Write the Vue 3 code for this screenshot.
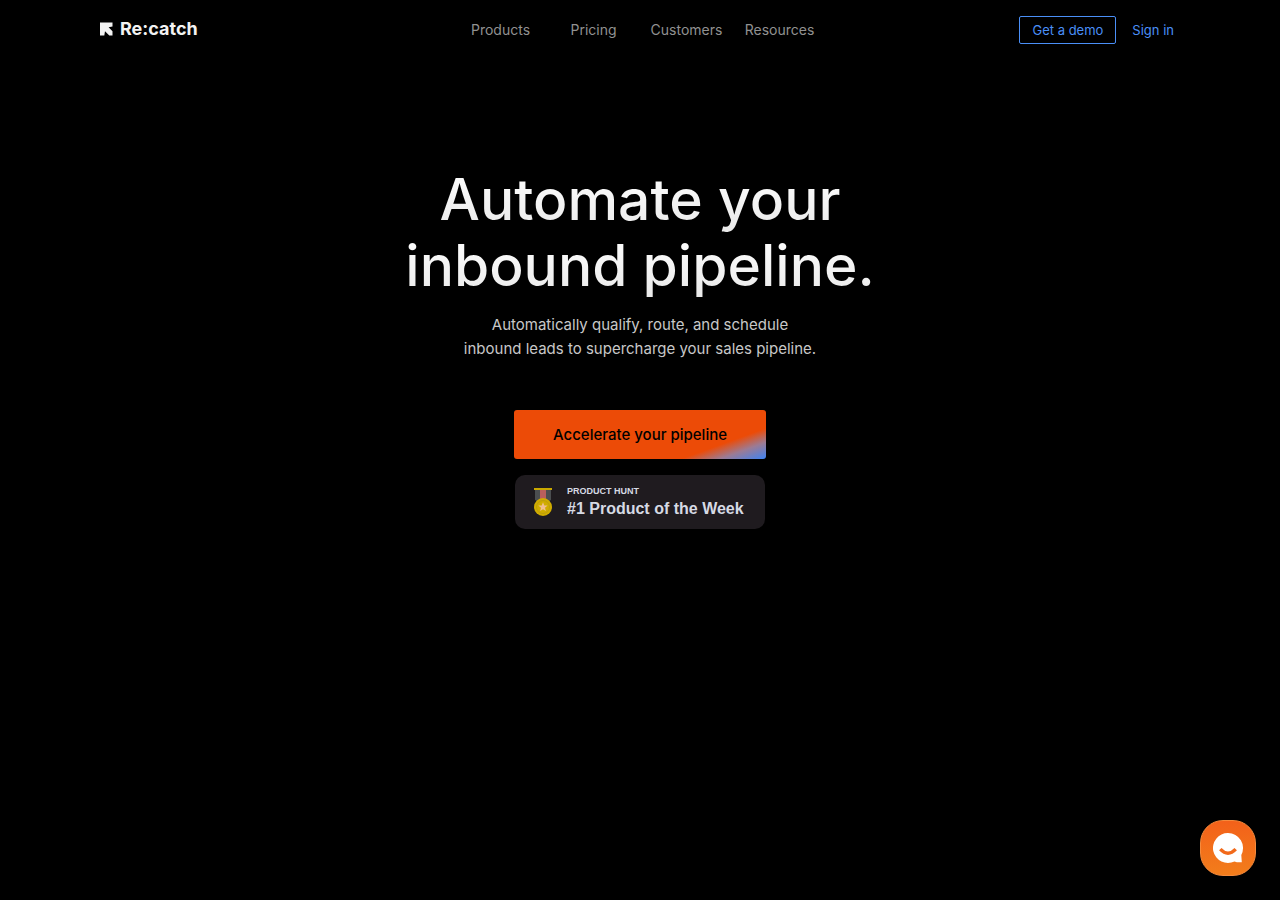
<script setup>
const links = ['Products', 'Pricing', 'Customers', 'Resources']
</script>

<template>
  <div class="page">
    <header class="top">
      <a class="brand" href="#" aria-label="Re:catch home">
        <svg width="13" height="14" viewBox="0 0 13 14" aria-hidden="true">
          <path fill="#f2f2f2" d="M0 .5H12.5V4.4L8.6 5.2 12.5 9.2V13.5H9.3L5 9.3 4.3 13.5H0Z" />
        </svg>
        <span>Re:catch</span>
      </a>
      <nav class="menu">
        <a v-for="l in links" :key="l" href="#">{{ l }}</a>
      </nav>
      <div class="account">
        <a class="demo" href="#">Get a demo</a>
        <a class="signin" href="#">Sign in</a>
      </div>
    </header>

    <main class="hero">
      <h1><span>Automate your</span><span>inbound pipeline.</span></h1>
      <p>Automatically qualify, route, and schedule<br />inbound leads to supercharge your sales pipeline.</p>
      <button class="cta" type="button">Accelerate your pipeline</button>
      <a class="award" href="#">
        <svg width="20" height="30" viewBox="0 0 20 30" aria-hidden="true">
          <path fill="#4b4e50" d="M2 2H18V13L14 15H6L2 13Z" />
          <path fill="#b95f5c" d="M7 2H13V12H7Z" />
          <path fill="#c9a800" d="M1 1H19V3H1Z" />
          <circle cx="10" cy="20" r="9" fill="#d0ac00" />
          <circle cx="10" cy="20" r="6.5" fill="none" stroke="#bd9d0c" />
          <path fill="#f1bf92" d="M10 15.2 11.3 18.4 14.6 18.6 12 20.8 12.9 24.1 10 22.3 7.1 24.1 8 20.8 5.4 18.6 8.7 18.4Z" />
        </svg>
        <span class="award-text">
          <small>PRODUCT HUNT</small>
          <strong>#1 Product of the Week</strong>
        </span>
      </a>
    </main>

    <button class="chat" type="button" aria-label="Open chat">
      <svg width="32" height="32" viewBox="0 0 32 32" aria-hidden="true">
        <path fill="#fff" d="M16 1A15 15 0 1 0 22.5 29.5C24.5 30.3 27 30.5 29.8 30.2L29.3 23A15 15 0 0 0 16 1Z" />
        <path fill="none" stroke="#f26a1b" stroke-width="3.4" d="M8.3 17.2Q16 25.4 23.7 17.2" />
      </svg>
    </button>
  </div>
</template>

<style>
body {
  margin: 0;
  background: #000;
}
</style>

<style scoped>
.page {
  min-height: 100vh;
  background: #000;
  font-family: Inter, "Liberation Sans", sans-serif;
}
a {
  text-decoration: none;
}
.top {
  display: grid;
  grid-template-columns: 1fr auto 1fr;
  align-items: center;
  height: 60px;
  padding: 0 100px;
  font-size: 14px;
}
.brand {
  display: flex;
  align-items: center;
  gap: 7px;
  color: #f2f2f2;
  font-size: 18px;
  font-weight: 700;
  line-height: 24px;
  padding-bottom: 2px;
}
.menu {
  display: grid;
  grid-template-columns: repeat(4, 93px);
  line-height: 26px;
  text-align: center;
}
.menu a {
  color: #919191;
}
.account {
  display: flex;
  justify-content: flex-end;
  align-items: center;
  gap: 16px;
  padding-right: 6px;
  font-size: 13px;
  line-height: 26px;
}
.account a {
  color: #4a8ff7;
}
.account .demo {
  padding: 0 12px;
  border: 1px solid #4a8ff7;
  border-radius: 2px;
}
.hero {
  display: flex;
  flex-direction: column;
  align-items: center;
  padding-top: 107px;
  text-align: center;
}
h1 {
  margin: 0;
  font-size: 57px;
  font-weight: 500;
  line-height: 66px;
}
h1 span {
  display: block;
  color: transparent;
  background: linear-gradient(#fff, #e9e9e9);
  background-clip: text;
}
p {
  margin: 14px 0 0;
  color: #c8c8c8;
  font-size: 15px;
  line-height: 24px;
}
.cta {
  width: 252px;
  height: 49px;
  margin-top: 49px;
  padding: 0;
  border: 1px solid #f05a1c;
  border-color: transparent;
  border-radius: 3px;
  background: linear-gradient(160deg, #ec4b07 78%, #9c7b94 88%, #3d83f5 100%) border-box;
  color: #000;
  font: 500 15px Inter, sans-serif;
}
.award {
  display: flex;
  align-items: center;
  box-sizing: border-box;
  width: 250px;
  height: 54px;
  margin-top: 16px;
  padding-left: 18px;
  gap: 14px;
  border-radius: 10px;
  background: #1f1b1f;
  color: #d6dae4;
  font-family: "Liberation Sans", Arial, sans-serif;
  text-align: left;
}
.award-text {
  display: flex;
  flex-direction: column;
}
.award small {
  font-size: 9px;
  font-weight: 700;
  line-height: 14px;
}
.award strong {
  font-size: 16px;
  line-height: 22px;
}
.chat {
  position: fixed;
  right: 24px;
  bottom: 24px;
  display: grid;
  place-items: center;
  width: 56px;
  height: 56px;
  padding: 0;
  border: 1px solid #f58a3c;
  border-radius: 23px;
  background: linear-gradient(#f3611a, #f27d1b);
}
</style>
